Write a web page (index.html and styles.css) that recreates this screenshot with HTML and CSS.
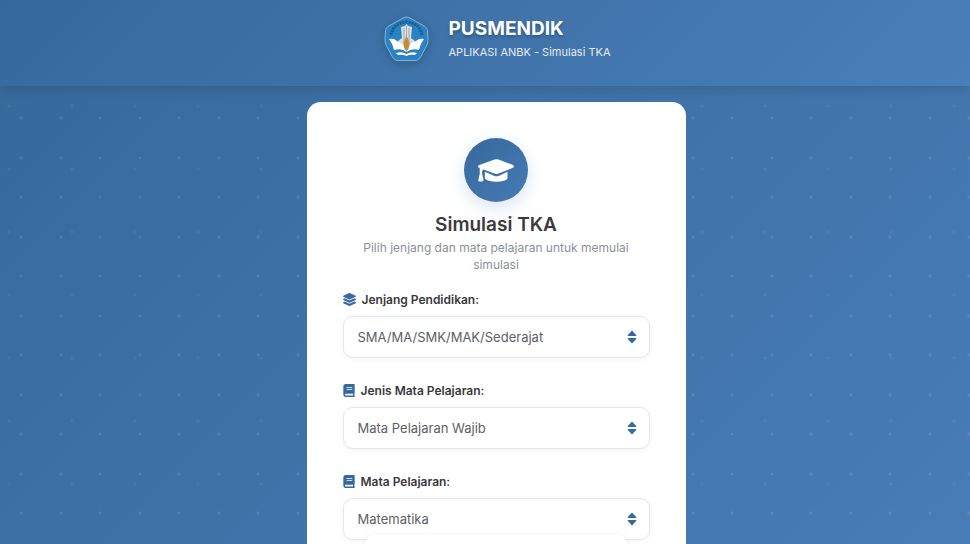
FILE: index.html
```html
<!DOCTYPE html>
<html lang="id">
  <head>
    <meta charset="UTF-8" />
    <meta name="viewport" content="width=device-width, initial-scale=1.0" />
    <title>Simulasi TKA</title>
    <link rel="stylesheet" href="styles.css">
  </head>
  <body>
    <svg class="sprite" aria-hidden="true">
      <symbol id="book" viewBox="0 0 448 512">
        <path d="M448 360V24c0-13.3-10.7-24-24-24H96C43 0 0 43 0 96v320c0 53 43 96 96 96h328c13.3 0 24-10.7 24-24v-16c0-7.5-3.5-14.3-8.9-18.7-4.2-15.4-4.2-59.3 0-74.7 5.4-4.3 8.9-11.1 8.9-18.6zM128 134c0-3.3 2.7-6 6-6h212c3.3 0 6 2.7 6 6v20c0 3.3-2.7 6-6 6H134c-3.3 0-6-2.7-6-6v-20zm0 64c0-3.3 2.7-6 6-6h212c3.3 0 6 2.7 6 6v20c0 3.3-2.7 6-6 6H134c-3.3 0-6-2.7-6-6v-20zm253.4 250H96c-17.7 0-32-14.3-32-32 0-17.6 14.4-32 32-32h285.4c-1.9 17.1-1.9 46.9 0 64z" />
      </symbol>
      <symbol id="sort" viewBox="0 0 10 14">
        <path d="M5 0.4 9.4 5.2Q9.6 6 8.8 6H1.2Q0.4 6 0.6 5.2ZM5 13.6 9.4 8.8Q9.6 8 8.8 8H1.2Q0.4 8 0.6 8.8Z" />
      </symbol>
    </svg>

    <header class="header">
      <svg class="logo" viewBox="0 0 45 46" role="img" aria-label="Logo">
        <path d="M22.5 1 Q24 1 26 2L41 10.500Q43 12 43.500 14.500L44 24Q44 27 42.500 30L36.500 41Q35 44 32 44.500H13Q10 44 8.500 41L2.500 30Q1 27 1 24L1.500 14.500Q2 12 4 10.500L19 2Q21 1 22.500 1Z" fill="#2a82c2" stroke="#7fb4da" stroke-width="1" />
        <path d="M7 19Q9 7 22.500 6Q36 7 38 19" fill="none" stroke="#1d5a8c" stroke-width="3" stroke-dasharray="2 1" />
        <path d="M5 23Q10 22 13 25L20 27 22.500 36Q18 32 10 34Q9 28 5 23ZM40 23Q35 22 32 25L25 27 22.500 36Q27 32 35 34Q36 28 40 23Z" fill="#fff" />
        <path d="M17 11 21 10 22.500 8 24 10 28 11 27 22 31 25 25 30H20L14 25 18 22Z" fill="#d9e0df" />
        <path d="M20 12V28M22.500 10V30M25 12V28" stroke="#9aaab2" stroke-width="1" />
        <path d="M22.500 20Q27 27 24.500 33L22.500 35 20.500 33Q18 27 22.500 20Z" fill="#c58b35" />
        <path d="M12 37Q18 35 22.500 38Q27 35 33 37L31 39Q26 38 22.500 40Q19 38 14 39Z" fill="#fff" />
      </svg>
      <div class="brand">
        <h1>PUSMENDIK</h1>
        <p>APLIKASI ANBK - Simulasi TKA</p>
      </div>
    </header>

    <main class="main">
      <form class="card">
        <div class="cardIcon">
          <svg viewBox="0 0 105 66" aria-hidden="true">
            <path d="M48 1Q54 -1 60 1L102 17Q107 21 102 25L60 42Q54 44 48 42L16 30 12 34V43L16 60Q16 65 12 65H4Q0 65 1 60L5 43V26Q0 24 0 21Q0 18 4 17Z" />
            <path d="M20 37 46 48Q54 51 62 48L86 37V56Q84 60 76 63Q54 69 32 63Q22 60 20 56Z" />
          </svg>
        </div>
        <h2>Simulasi TKA</h2>
        <p class="intro">Pilih jenjang dan mata pelajaran untuk memulai simulasi</p>

        <div class="field">
          <label for="jenjang">
            <svg class="layers" viewBox="0 0 512 512" aria-hidden="true">
              <path d="M12.410 148.020l232.940 105.670c6.800 3.090 14.490 3.090 21.290 0l232.940-105.670c16.550-7.510 16.550-32.520 0-40.030L266.650 2.310a25.607 25.607 0 0 0-21.290 0L12.410 107.980c-16.550 7.510-16.550 32.530 0 40.040zm487.180 88.280l-58.090-26.330-161.640 73.270c-7.560 3.430-15.590 5.170-23.860 5.170s-16.290-1.740-23.860-5.170L70.510 209.970l-58.100 26.330c-16.550 7.500-16.550 32.500 0 40l232.940 105.590c6.800 3.080 14.490 3.080 21.290 0L499.590 276.300c16.550-7.500 16.550-32.500 0-40zm0 127.800l-57.870-26.230-161.860 73.370c-7.560 3.430-15.590 5.170-23.860 5.170s-16.290-1.740-23.860-5.170L70.290 337.870 12.410 364.100c-16.550 7.500-16.550 32.500 0 40l232.940 105.590c6.800 3.080 14.490 3.080 21.290 0L499.590 404.100c16.550-7.500 16.550-32.500 0-40z" />
            </svg>
            Jenjang Pendidikan:
          </label>
          <div class="selectBox">
            <select id="jenjang">
              <option>SMA/MA/SMK/MAK/Sederajat</option>
            </select>
            <svg class="sort" aria-hidden="true"><use href="#sort" /></svg>
          </div>
        </div>

        <div class="field">
          <label for="jenis">
            <svg class="book" aria-hidden="true"><use href="#book" /></svg>
            Jenis Mata Pelajaran:
          </label>
          <div class="selectBox">
            <select id="jenis">
              <option>Mata Pelajaran Wajib</option>
            </select>
            <svg class="sort" aria-hidden="true"><use href="#sort" /></svg>
          </div>
        </div>

        <div class="field">
          <label for="mapel">
            <svg class="book" aria-hidden="true"><use href="#book" /></svg>
            Mata Pelajaran:
          </label>
          <div class="selectBox">
            <select id="mapel">
              <option>Matematika</option>
            </select>
            <svg class="sort" aria-hidden="true"><use href="#sort" /></svg>
          </div>
        </div>
      </form>
      <div class="bottomSheet"></div>
    </main>
  </body>
</html>
```
FILE: styles.css
```css
* {
  margin: 0;
  padding: 0;
  box-sizing: border-box;
  font-family: "Inter", sans-serif;
}
body {
  height: 100vh;
  display: flex;
  flex-direction: column;
  overflow: hidden;
  background: linear-gradient(135deg, #36699a 0%, #487cb6 100%);
}
.sprite {
  position: absolute;
  width: 0;
  height: 0;
}
.header {
  position: relative;
  display: flex;
  justify-content: center;
  align-items: center;
  gap: 20px;
  padding: 16px 0 24px 24px;
  background: linear-gradient(135deg, #36699b 0%, #4a7eb9 100%);
  box-shadow: 0 2px 12px rgba(0, 0, 0, 0.15);
  color: white;
}
.logo {
  width: 45px;
  height: 46px;
  filter: drop-shadow(0 2px 4px rgba(0, 0, 0, 0.2));
}
.brand h1 {
  font-size: 19px;
  line-height: 26px;
  font-weight: 700;
  text-shadow: 0 2px 3px rgba(0, 0, 0, 0.25);
}
.brand p {
  font-size: 11px;
  line-height: 20px;
  color: #e3ebf4;
}
/* two dot grids over the page gradient */
.main {
  flex: 1;
  min-height: 0;
  display: flex;
  justify-content: center;
  align-items: flex-start;
  padding: 16px 0 0 22px;
  background-image:
    radial-gradient(circle at 21px 32px, rgba(255, 255, 255, 0.1) 1px, transparent 2px),
    radial-gradient(circle at 61px 32px, rgba(255, 255, 255, 0.1) 1px, transparent 2px),
    radial-gradient(circle at 21px 72px, rgba(255, 255, 255, 0.1) 1px, transparent 2px),
    radial-gradient(circle at 61px 72px, rgba(255, 255, 255, 0.1) 1px, transparent 2px),
    radial-gradient(circle at 9px 20px, rgba(255, 255, 255, 0.05) 1px, transparent 2px);
  background-size: 79px 79px, 79px 79px, 79px 79px, 79px 79px, 63px 63px;
}
.card {
  width: 90%;
  max-width: 379px;
  padding: 36px;
  border-radius: 14px;
  background: white;
  text-align: center;
}
.cardIcon {
  width: 64px;
  height: 64px;
  margin: 0 auto 9px;
  display: flex;
  justify-content: center;
  align-items: center;
  border-radius: 50%;
  background: linear-gradient(135deg, #36699b, #467ab4);
  box-shadow: 0 6px 18px rgba(70, 120, 180, 0.2);
}
.cardIcon svg {
  width: 36px;
  height: 23px;
  fill: white;
}
.card h2 {
  font-size: 19px;
  line-height: 28px;
  font-weight: 600;
  color: #3b3b3d;
}
.intro {
  padding: 0 16px;
  margin-bottom: 18px;
  font-size: 12px;
  line-height: 17px;
  color: #8a9097;
}
.field {
  margin-bottom: 24px;
}
.field label {
  display: flex;
  align-items: center;
  gap: 6px;
  margin-bottom: 8px;
  font-size: 12px;
  line-height: 17px;
  font-weight: 600;
  color: #38393c;
}
.layers {
  width: 13px;
  height: 13px;
  fill: #3569a0;
}
.book {
  width: 12px;
  height: 13px;
  fill: #3569a0;
}
.selectBox {
  position: relative;
}
.selectBox select {
  width: 100%;
  height: 42px;
  padding: 0 36px 0 14px;
  appearance: none;
  border: 1px solid #e3e7ef;
  border-radius: 10px;
  background: white;
  box-shadow: 0 1px 5px rgba(60, 90, 130, 0.08);
  color: #5d6065;
  font-size: 13px;
  font-weight: 400;
  cursor: pointer;
}
.sort {
  position: absolute;
  top: 14px;
  right: 13px;
  width: 10px;
  height: 14px;
  fill: #3569a0;
  pointer-events: none;
}
.bottomSheet {
  position: fixed;
  left: 22px;
  right: 0;
  bottom: 0;
  width: 262px;
  height: 9px;
  margin: 0 auto;
  border-radius: 9px 9px 0 0;
  background: white;
  box-shadow: 0 0 6px rgba(60, 90, 130, 0.08);
}
```
